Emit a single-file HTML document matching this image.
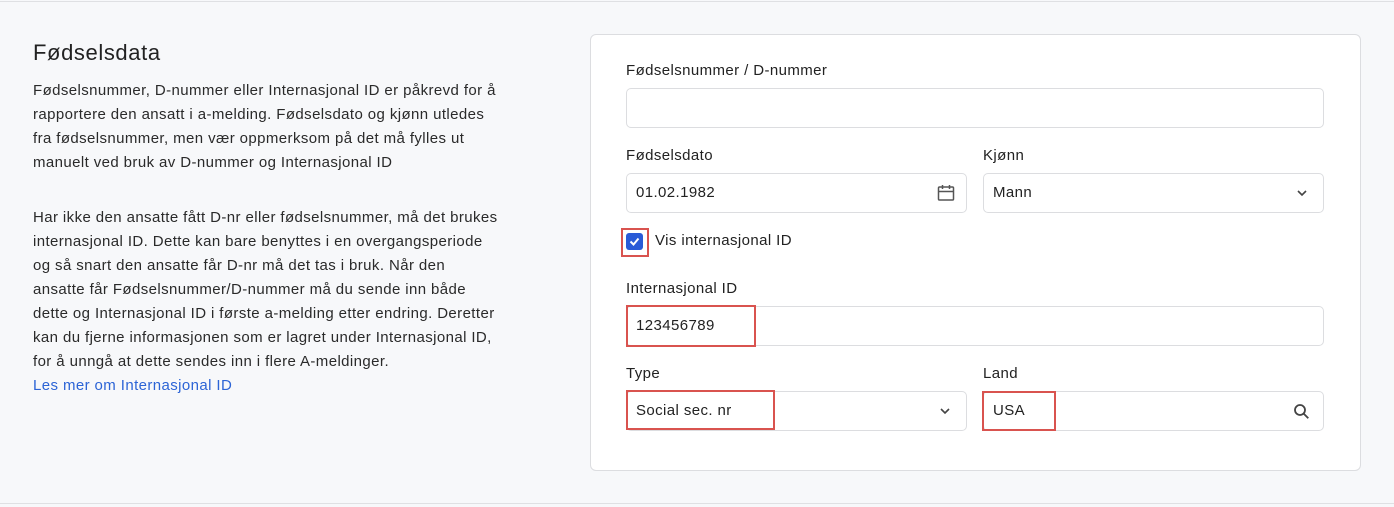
<!DOCTYPE html><html><head><style>
body{margin:0;width:1394px;height:507px;background:#f7f8fa;font-family:"Liberation Sans",sans-serif;color:#222;position:relative;overflow:hidden}
.a{position:absolute}
.p{font-size:15px;letter-spacing:0.4px;line-height:24px;color:#2a2a2a;white-space:nowrap}
.lb{font-size:15px;letter-spacing:0.4px;color:#222}
.in{position:absolute;background:#fff;border:1px solid #dcdde0;border-radius:5px;box-sizing:border-box;height:40px;font-size:15px;letter-spacing:0.4px;line-height:38px;padding-left:9px;color:#222}
.r{position:absolute;border:2px solid #d9534f;box-sizing:border-box}
</style></head><body>
<div class="a" style="left:0;top:1px;width:1394px;height:1px;background:#dfe0e3"></div>
<div class="a" style="left:0;top:503px;width:1394px;height:1px;background:#dfe0e3"></div>
<div class="a" style="left:33px;top:40px;font-size:22px;letter-spacing:0.6px;color:#222">Fødselsdata</div>
<div class="a p" style="left:33px;top:79px">Fødselsnummer, D-nummer eller Internasjonal ID er påkrevd for å<br>rapportere den ansatt i a-melding. Fødselsdato og kjønn utledes<br>fra fødselsnummer, men vær oppmerksom på det må fylles ut<br>manuelt ved bruk av D-nummer og Internasjonal ID</div>
<div class="a p" style="left:33px;top:206px">Har ikke den ansatte fått D-nr eller fødselsnummer, må det brukes<br>internasjonal ID. Dette kan bare benyttes i en overgangsperiode<br>og så snart den ansatte får D-nr må det tas i bruk. Når den<br>ansatte får Fødselsnummer/D-nummer må du sende inn både<br>dette og Internasjonal ID i første a-melding etter endring. Deretter<br>kan du fjerne informasjonen som er lagret under Internasjonal ID,<br>for å unngå at dette sendes inn i flere A-meldinger.<br><span style="color:#2c64d6">Les mer om Internasjonal ID</span></div>
<div class="a" style="left:590px;top:34px;width:771px;height:437px;background:#fff;border:1px solid #dcdde0;border-radius:6px;box-sizing:border-box"></div>
<div class="a lb" style="left:626px;top:62px">Fødselsnummer / D-nummer</div>
<div class="in" style="left:626px;top:88px;width:698px"></div>
<div class="a lb" style="left:626px;top:147px">Fødselsdato</div>
<div class="in" style="left:626px;top:173px;width:341px">01.02.1982
<svg class="a" style="left:310px;top:10px" width="18" height="18" viewBox="0 0 18 18" fill="none" stroke="#555" stroke-width="1.5"><rect x="1.5" y="3" width="15" height="13" rx="1"/><path d="M1.5 7.5h15M5.5 1v4M12.5 1v4"/></svg></div>
<div class="a lb" style="left:983px;top:147px">Kjønn</div>
<div class="in" style="left:983px;top:173px;width:341px">Mann
<svg class="a" style="left:312px;top:14px" width="12" height="10" viewBox="0 0 12 10" fill="none" stroke="#444" stroke-width="1.6"><path d="M2 3l4 4 4-4"/></svg></div>
<div class="a" style="left:626px;top:233px;width:17px;height:17px;background:#2a5bd7;border-radius:3px"><svg width="17" height="17" viewBox="0 0 17 17" fill="none" stroke="#fff" stroke-width="2"><path d="M4.5 8.5l3 3 5-6"/></svg></div>
<div class="r" style="left:621px;top:228px;width:28px;height:29px"></div>
<div class="a lb" style="left:655px;top:232px">Vis internasjonal ID</div>
<div class="a lb" style="left:626px;top:280px">Internasjonal ID</div>
<div class="in" style="left:626px;top:306px;width:698px">123456789</div>
<div class="r" style="left:626px;top:305px;width:130px;height:42px"></div>
<div class="a lb" style="left:626px;top:365px">Type</div>
<div class="in" style="left:626px;top:391px;width:341px">Social sec. nr
<svg class="a" style="left:312px;top:14px" width="12" height="10" viewBox="0 0 12 10" fill="none" stroke="#444" stroke-width="1.6"><path d="M2 3l4 4 4-4"/></svg></div>
<div class="r" style="left:626px;top:390px;width:149px;height:40px"></div>
<div class="a lb" style="left:983px;top:365px">Land</div>
<div class="in" style="left:983px;top:391px;width:341px">USA
<svg class="a" style="left:309px;top:11px" width="17" height="17" viewBox="0 0 17 17" fill="none" stroke="#444" stroke-width="1.8"><circle cx="7" cy="7" r="5"/><path d="M10.8 10.8l4.5 4.5"/></svg></div>
<div class="r" style="left:982px;top:391px;width:74px;height:40px"></div>
</body></html>
